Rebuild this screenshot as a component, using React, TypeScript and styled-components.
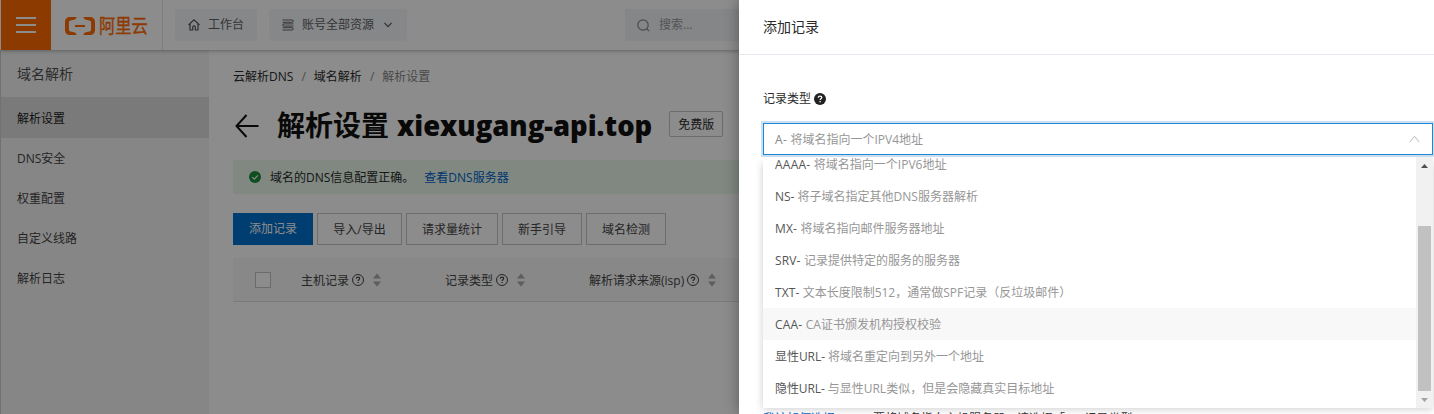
import React from 'react';
import styled, { createGlobalStyle } from 'styled-components';

const GlobalStyle = createGlobalStyle`
  * { box-sizing: border-box; }
  body {
    margin: 0;
    overflow: hidden;
    font-family: "Open Sans", "Noto Sans CJK SC", sans-serif;
    font-size: 12px;
    line-height: 20px;
    color: #333;
    background: #fff;
  }
`;

const Page = styled.div`
  position: relative;
  width: 1434px;
  height: 414px;
  overflow: hidden;
  display: flex;
  flex-direction: column;
`;

/* ---------- top bar ---------- */
const TopBar = styled.header`
  height: 50px;
  flex: none;
  display: flex;
  align-items: center;
  padding-left: 1px;
  background: #fff;
  position: relative;
  box-shadow: 0 1px 4px rgba(0, 0, 0, 0.3);
`;

const MenuButton = styled.div`
  width: 50px;
  height: 50px;
  background: #ff6a00;
  display: flex;
  flex-direction: column;
  align-items: center;
  justify-content: center;
  gap: 5px;
`;

const MenuBar = styled.span`
  width: 20px;
  height: 2px;
  background: #fff;
`;

const Brand = styled.div`
  width: 112px;
  height: 50px;
  padding: 2px 0 0 14px;
  display: flex;
  align-items: center;
  gap: 4px;
  border-right: 1px solid #e3e4e6;
  color: #ff6a00;
`;

const BrandName = styled.span`
  font-size: 16.3px;
  font-weight: 400;
  transform: scaleY(1.16);
  -webkit-text-stroke: 0.3px #ff6a00;
`;

const NavButton = styled.div<{ $width: number }>`
  width: ${(p) => p.$width}px;
  height: 32px;
  margin-left: 12px;
  padding-left: 13px;
  display: flex;
  align-items: center;
  background: #f4f6f9;
  border-radius: 2px;
  color: #606060;
`;

const NavLabel = styled.span`
  margin: 0 10px 0 8px;
`;

const SearchBox = styled.div`
  margin-left: 218px;
  width: 400px;
  height: 32px;
  padding-left: 12px;
  display: flex;
  align-items: center;
  gap: 9px;
  background: #f0f4f8;
  color: #999;
`;

/* ---------- side menu ---------- */
const Body = styled.div`
  flex: 1;
  display: flex;
  min-height: 0;
`;

const Sidebar = styled.nav`
  width: 209px;
  flex: none;
  background: #f5f5f5;
  border-left: 1px solid #cfcfcf;
`;

const SidebarTitle = styled.div`
  height: 47px;
  line-height: 47px;
  padding-left: 16px;
  font-size: 14px;
  color: #505050;
`;

const SidebarItem = styled.div<{ $active?: boolean }>`
  height: ${(p) => (p.$active ? 41 : 40)}px;
  line-height: ${(p) => (p.$active ? 44 : 42)}px;
  padding-left: 16px;
  background: ${(p) => (p.$active ? '#dedede' : 'transparent')};
  color: ${(p) => (p.$active ? '#1c1c1c' : '#444')};
`;

/* ---------- main content ---------- */
const Main = styled.main`
  flex: 1;
  padding: 17px 0 0 24px;
  background: #fff;
`;

const Breadcrumb = styled.div`
  display: flex;
  height: 20px;
`;

const Crumb = styled.span<{ $muted?: boolean }>`
  color: ${(p) => (p.$muted ? '#888' : '#2a2a2a')};
`;

const Slash = styled.span`
  width: 20.500px;
  text-align: center;
  color: #888;
`;

const Heading = styled.div`
  display: flex;
  align-items: center;
  height: 40px;
  margin-top: 19px;
`;

const Title = styled.h1`
  margin: -2px 17px 0 17px;
  font-size: 28px;
  line-height: 40px;
  font-weight: 700;
  color: #111;
  white-space: nowrap;
`;

const TitleDomain = styled.span`
  margin-left: 8px;
  font-size: 27.4px;
  font-weight: 800;
`;

const Tag = styled.span`
  width: 54px;
  height: 26px;
  line-height: 26px;
  margin-top: -4px;
  text-align: center;
  border: 1px solid #c4c4c4;
  border-radius: 2px;
  color: #2a2a2a;
`;

const Notice = styled.div`
  height: 34px;
  margin-top: 14px;
  padding-left: 16px;
  display: flex;
  align-items: center;
  background: #e9f8eb;
  color: #2a2a2a;
`;

const NoticeText = styled.span`
  margin: 0 10px 0 9px;
  padding-top: 2px;
`;

const NoticeLink = styled.a`
  padding-top: 2px;
  color: #0064c8;
`;

const Actions = styled.div`
  display: flex;
  gap: 4px;
  margin-top: 19px;
`;

const Action = styled.button<{ $width: number; $primary?: boolean }>`
  width: ${(p) => p.$width}px;
  height: 32px;
  padding: ${(p) => (p.$primary ? 0 : 2)}px 0 0;
  font: inherit;
  color: ${(p) => (p.$primary ? '#fff' : '#444')};
  background: ${(p) => (p.$primary ? '#0070cc' : '#fff')};
  border: 1px solid ${(p) => (p.$primary ? '#0070cc' : '#c6c6c6')};
`;

const TableHead = styled.div`
  height: 44px;
  margin-top: 13px;
  padding-left: 22px;
  display: flex;
  align-items: center;
  background: #f7f7f7;
  border-bottom: 1px solid #e0e0e0;
  color: #444;
`;

const Checkbox = styled.span`
  width: 16px;
  height: 16px;
  margin-right: 30px;
  border: 1px solid #c4c4c4;
  background: #fff;
`;

const Column = styled.div`
  width: 144px;
  display: flex;
  align-items: center;
  white-space: nowrap;
`;

const ColumnName = styled.span`
  padding-top: 2px;
`;

const HeadIcon = styled.svg`
  flex: none;
  margin-left: 2.500px;
`;

const SortIcon = styled.svg`
  flex: none;
  margin-left: 9px;
`;

/* ---------- drawer ---------- */
const Mask = styled.div`
  position: absolute;
  inset: 0;
  background: rgba(0, 0, 0, 0.45);
`;

const Drawer = styled.aside`
  position: absolute;
  top: 0;
  right: 0;
  width: 695px;
  height: 414px;
  background: #fff;
  box-shadow: -2px 0 12px rgba(0, 0, 0, 0.28);
`;

const DrawerHeader = styled.div`
  height: 55px;
  padding-left: 24px;
  line-height: 54px;
  font-size: 14px;
  color: #2a2a2a;
  border-bottom: 1px solid #e3e9ee;
`;

const DrawerBody = styled.div`
  padding: 34px 1px 0 24px;
`;

const FieldLabel = styled.div`
  height: 20px;
  display: flex;
  align-items: center;
  gap: 3px;
  color: #2a2a2a;
`;

const SelectBox = styled.div`
  height: 32px;
  margin-top: 14px;
  padding: 0 12px 0 11px;
  display: flex;
  align-items: center;
  justify-content: space-between;
  border: 1px solid #1f87d6;
  background: #fff;
  box-shadow: 0 0 0 2px #cde0f1;
`;

const SelectedValue = styled.span`
  padding-top: 2px;
`;

const Dropdown = styled.div`
  position: absolute;
  top: 157px;
  left: 24px;
  width: 670px;
  height: 251px;
  display: flex;
  background: #fff;
  overflow: hidden;
`;

const DropdownShadow = styled.div`
  position: absolute;
  top: 162px;
  left: 24px;
  width: 670px;
  height: 246px;
  box-shadow: 0 1px 8px rgba(0, 0, 0, 0.2);
`;

const OptionList = styled.div`
  flex: 1;
  height: 251px;
  display: flex;
  flex-direction: column;
  justify-content: flex-end;
  padding-bottom: 4px;
`;

const Option = styled.div<{ $hover?: boolean }>`
  height: 32px;
  flex: none;
  line-height: 34px;
  padding-left: 12px;
  white-space: nowrap;
  background: ${(p) => (p.$hover ? '#f8f8f8' : 'transparent')};
`;

const Kind = styled.span<{ $soft?: boolean; $track?: number }>`
  letter-spacing: ${(p) => p.$track ?? 0}px;
  color: ${(p) => (p.$soft ? '#868686' : '#555')};
`;

const Detail = styled.span`
  color: #969696;
`;

const Scrollbar = styled.div`
  width: 17px;
  height: 251px;
  display: flex;
  flex-direction: column;
  align-items: center;
  justify-content: space-between;
  padding: 7px 0 6px;
  background: #f1f1f1;
`;

const Thumb = styled.div`
  width: 13px;
  height: 165px;
  margin-top: auto;
  margin-bottom: 7px;
  background: #c1c1c1;
`;

const Hint = styled.div`
  margin-top: 254px;
  display: flex;
  gap: 38px;
  height: 20px;
  color: #333;
  white-space: nowrap;
`;

const HintLink = styled.a`
  color: #0064c8;
`;

const MENU = ['解析设置', 'DNS安全', '权重配置', '自定义线路', '解析日志'];
const BUTTONS: [string, number][] = [
  ['添加记录', 80],
  ['导入/导出', 85],
  ['请求量统计', 92],
  ['新手引导', 80],
  ['域名检测', 80],
];
const COLUMNS = ['主机记录', '记录类型', '解析请求来源(isp)'];
const OPTIONS: [string, string, number][] = [
  ['AAAA-', '将域名指向一个IPV6地址', 0.25],
  ['NS-', '将子域名指定其他DNS服务器解析', 0],
  ['MX-', '将域名指向邮件服务器地址', 0.2],
  ['SRV-', '记录提供特定的服务的服务器', 0.15],
  ['TXT-', '文本长度限制512，通常做SPF记录（反垃圾邮件）', 0.1],
  ['CAA-', 'CA证书颁发机构授权校验', 0.2],
  ['显性URL-', '将域名重定向到另外一个地址', -0.05],
  ['隐性URL-', '与显性URL类似，但是会隐藏真实目标地址', -0.1],
];

const BrandMark = () => (
  <svg width="30" height="18" viewBox="0 0 30 18" fill="currentColor">
    <path d="M11.8 0H5.2C2 0 0 2 0 5v8c0 3 2 5 5.200 5h6.600l-1.600-2.400-4.600-1c-1-.3-1.700-1-1.700-2V5.400c0-1 .7-1.700 1.700-2l4.600-1z" />
    <path d="M18.200 0h6.600C28 0 30 2 30 5v8c0 3-2 5-5.200 5h-6.600l1.600-2.400 4.600-1c1-.3 1.700-1 1.700-2V5.400c0-1-.7-1.700-1.700-2l-4.600-1z" />
    <path d="M10 8h10v2H10z" />
  </svg>
);

const HelpCircle = () => (
  <HeadIcon width="12" height="12" viewBox="0 0 12 12" fill="none" stroke="#444">
    <circle cx="6" cy="6" r="5.5" />
    <path d="M4.3 4.8C4.4 3.7 5 3.2 6 3.2s1.7.6 1.7 1.4c0 1.1-1.6 1.1-1.6 2.3" strokeWidth="1.2" />
    <path d="M6.1 7.9v1.2" strokeWidth="1.3" />
  </HeadIcon>
);

export default function App() {
  return (
    <Page>
      <GlobalStyle />
      <TopBar>
        <MenuButton>
          <MenuBar />
          <MenuBar />
          <MenuBar />
        </MenuButton>
        <Brand>
          <BrandMark />
          <BrandName>阿里云</BrandName>
        </Brand>
        <NavButton $width={82}>
          <svg width="12" height="12" viewBox="0 0 12 12" fill="none" stroke="#555" strokeWidth="1.2">
            <path d="M.5 6 6 .9 11.5 6M2 5v6h2.7V8.2c0-1.7 2.6-1.7 2.6 0V11H10V5" />
          </svg>
          <NavLabel>工作台</NavLabel>
        </NavButton>
        <NavButton $width={138}>
          <svg width="12" height="12" viewBox="0 0 12 12" fill="none" stroke="#666" strokeWidth="1">
            <path d="M.6 1h9.2q1.6 0 1.6 1.1T9.8 3.3H.6M11.4 4.9H2.2Q.6 4.9.6 6t1.6 1.1h9.2M.6 8.7h9.2q1.6 0 1.6 1.1T9.8 11H.6" />
          </svg>
          <NavLabel>账号全部资源</NavLabel>
          <svg width="8" height="6" viewBox="0 0 8 6" fill="none" stroke="#555" strokeWidth="1.2">
            <path d="M.5.8 4 4.600 7.500.8" />
          </svg>
        </NavButton>
        <SearchBox>
          <svg width="13" height="13" viewBox="0 0 13 13" fill="none" stroke="#888" strokeWidth="1.2">
            <circle cx="6" cy="6" r="5.2" />
            <path d="m9.500 9.500 2.600 2.600" />
          </svg>
          搜索...
        </SearchBox>
      </TopBar>

      <Body>
        <Sidebar>
          <SidebarTitle>域名解析</SidebarTitle>
          {MENU.map((m, i) => (
            <SidebarItem key={m} $active={i === 0}>{m}</SidebarItem>
          ))}
        </Sidebar>
        <Main>
          <Breadcrumb>
            <Crumb>云解析DNS</Crumb>
            <Slash>/</Slash>
            <Crumb>域名解析</Crumb>
            <Slash>/</Slash>
            <Crumb $muted>解析设置</Crumb>
          </Breadcrumb>
          <Heading>
            <svg width="27" height="24" viewBox="0 0 27 24" fill="none" stroke="#111" strokeWidth="2">
              <path d="M13.500 1 3.500 12l10 11M3 12h22.500" />
            </svg>
            <Title>
              解析设置<TitleDomain>xiexugang-api.top</TitleDomain>
            </Title>
            <Tag>免费版</Tag>
          </Heading>
          <Notice>
            <svg width="12" height="12" viewBox="0 0 12 12" fill="none">
              <circle cx="6" cy="6" r="6" fill="#1e8e3e" />
              <path d="m3.300 6.100 2 2 3.600-3.800" stroke="#fff" strokeWidth="1.100" />
            </svg>
            <NoticeText>域名的DNS信息配置正确。</NoticeText>
            <NoticeLink>查看DNS服务器</NoticeLink>
          </Notice>
          <Actions>
            {BUTTONS.map(([label, w], i) => (
              <Action key={label} $width={w} $primary={i === 0}>{label}</Action>
            ))}
          </Actions>
          <TableHead>
            <Checkbox />
            {COLUMNS.map((c) => (
              <Column key={c}>
                <ColumnName>{c}</ColumnName>
                <HelpCircle />
                <SortIcon width="8" height="14" viewBox="0 0 8 14" fill="#aaa">
                  <path d="M4 .5 8 5.500H0zM4 13.500 8 8.500H0z" />
                </SortIcon>
              </Column>
            ))}
          </TableHead>
        </Main>
      </Body>

      <Mask />

      <Drawer>
        <DrawerHeader>添加记录</DrawerHeader>
        <DrawerBody>
          <FieldLabel>
            记录类型
            <svg width="12" height="12" viewBox="0 0 12 12" fill="none">
              <circle cx="6" cy="6" r="6" fill="#222" />
              <path d="M4.200 4.800C4.300 3.700 5 3.200 6 3.200s1.800.6 1.800 1.400c0 1.100-1.700 1.100-1.700 2.300M6.100 7.900v1.300" stroke="#fff" strokeWidth="1.300" />
            </svg>
          </FieldLabel>
          <SelectBox>
            <SelectedValue>
              <Kind $soft $track={0.3}>A- </Kind>
              <Detail>将域名指向一个IPV4地址</Detail>
            </SelectedValue>
            <svg width="11" height="8" viewBox="0 0 11 8" fill="none" stroke="#bbb">
              <path d="m.8 7.200 4.700-6 4.700 6" />
            </svg>
          </SelectBox>
          <Hint>
            <HintLink>我该如何选择</HintLink>
            <span>要将域名指向主机服务器，请选择「A」记录类型</span>
          </Hint>
        </DrawerBody>
        <DropdownShadow />
        <Dropdown>
          <OptionList>
            {OPTIONS.map(([kind, detail, track], i) => (
              <Option key={kind} $hover={i === 5}>
                <Kind $track={track}>{kind} </Kind>
                <Detail>{detail}</Detail>
              </Option>
            ))}
          </OptionList>
          <Scrollbar>
            <svg width="7" height="4" viewBox="0 0 7 4" fill="#505050">
              <path d="M3.500 0 7 4H0z" />
            </svg>
            <Thumb />
            <svg width="7" height="4" viewBox="0 0 7 4" fill="#a3a3a3">
              <path d="M3.500 4 7 0H0z" />
            </svg>
          </Scrollbar>
        </Dropdown>
      </Drawer>
    </Page>
  );
}
